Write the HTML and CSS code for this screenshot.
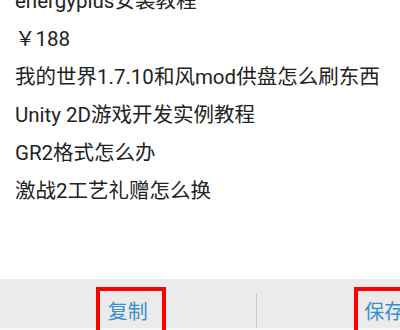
FILE: index.html
```html
<!DOCTYPE html>
<html lang="zh">
<head>
<meta charset="utf-8">
<link rel="stylesheet" href="styles.css">
</head>
<body>
<div class="page">
  <div class="content">
    <ul class="list">
      <li>energyplus安装教程</li>
      <li>￥188</li>
      <li>我的世界1.7.10和风mod供盘怎么刷东西</li>
      <li>Unity 2D游戏开发实例教程</li>
      <li>GR2格式怎么办</li>
      <li>激战2工艺礼赠怎么换</li>
    </ul>
  </div>
  <div class="bar">
    <div class="btn">复制</div>
    <div class="divider"></div>
    <div class="btn">保存</div>
    <div class="mark mark-left"></div>
    <div class="mark mark-right"></div>
  </div>
  <div class="bottom"></div>
</div>
</body>
</html>
```

FILE: styles.css
```css
html, body {
  margin: 0;
  padding: 0;
  background: #fff;
}
.page {
  width: 400px;
  height: 330px;
  overflow: hidden;
  font-family: "Roboto", "Noto Sans CJK SC", sans-serif;
}
.content {
  height: 279px;
  overflow: hidden;
}
.list {
  list-style: none;
  margin: -18px 0 0 0;
  padding: 0 0 0 15px;
  font-size: 20.5px;
  line-height: 38px;
  color: #222;
  white-space: nowrap;
}
.bar {
  position: relative;
  width: 512px;
  height: 49px;
  background: #ebebeb;
  display: flex;
  align-items: center;
}
.btn {
  flex: 1;
  text-align: center;
  font-size: 20px;
  color: #3a8ed2;
  padding-top: 17px;
  line-height: 30px;
}
.divider {
  width: 1px;
  height: 34px;
  margin-top: 15px;
  background: #c9c9c9;
}
.mark {
  position: absolute;
  top: 8px;
  width: 62px;
  height: 46px;
  border: 4px solid #ff0000;
}
.mark-left { left: 96px; }
.mark-right { left: 354px; }
.bottom {
  height: 2px;
  background: #f7f7f7;
}
```
